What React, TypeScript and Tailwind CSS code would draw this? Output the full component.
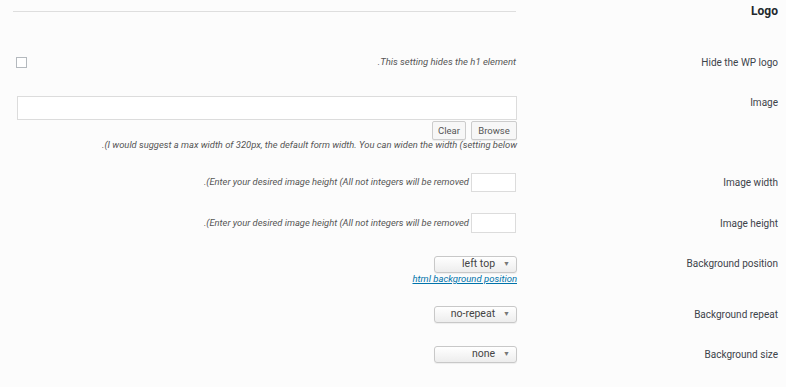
import React from "react";

const font = { fontFamily: "Roboto, 'Noto Sans', sans-serif" };

function Select({ value }: { value: string }) {
  return (
    <div className="w-[83px] h-[17px] flex items-center justify-end pr-[6px] border border-[#c8c8c8] rounded-[3px] bg-gradient-to-b from-[#ffffff] to-[#ededed] shadow-[0_1px_1px_rgba(0,0,0,0.06)]">
      <span className="text-[10.5px] text-[#444] leading-none">{value}</span>
      <span className="text-[7px] text-[#777] ml-[8px] leading-none">▼</span>
    </div>
  );
}

function Label({ children, className = "" }: { children: React.ReactNode; className?: string }) {
  return (
    <div className={"flex-1 text-right pr-[8px] text-[10px] text-[#3c434a] " + className}>{children}</div>
  );
}

export default function App() {
  return (
    <div style={font} className="w-[786px] h-[387px] bg-[#fcfcfc] overflow-hidden">
      {/* Header */}
      <div className="flex h-[22px] items-center">
        <div className="w-[517px] pl-[13px] pr-[1px]">
          <div className="h-px bg-[#dedede]" />
        </div>
        <Label className="font-bold !text-[12px] !text-[#23282d]">Logo</Label>
      </div>

      {/* Hide WP logo */}
      <div className="flex h-[25px] items-center mt-[28px]">
        <div className="w-[517px] flex items-center justify-between pl-[16px] pr-[1px]">
          <div className="w-[11px] h-[11px] border border-[#b4b9be] bg-white" />
          <span className="italic text-[9.5px] text-[#555]">.This setting hides the h1 element</span>
        </div>
        <Label>Hide the WP logo</Label>
      </div>

      {/* Image */}
      <div className="flex items-start mt-[21px]">
        <div className="w-[517px] pl-[17px] flex flex-col items-end">
          <div className="w-full h-[24px] border border-[#dcdcdc] bg-white" />
          <div className="flex gap-[5px] mt-[1px]">
            <button className="w-[34px] h-[19px] border border-[#cccccc] rounded-[2px] bg-[#f7f7f7] text-[9.5px] text-[#555] leading-none shadow-[0_1px_0_rgba(0,0,0,0.06)]">Clear</button>
            <button className="w-[46px] h-[19px] border border-[#cccccc] rounded-[2px] bg-[#f7f7f7] text-[9.5px] text-[#555] leading-none shadow-[0_1px_0_rgba(0,0,0,0.06)]">Browse</button>
          </div>
          <div className="italic text-[9.4px] text-[#555] leading-[11px] -mt-[1px]">.(I would suggest a max width of 320px, the default form width. You can widen the width (setting below</div>
        </div>
        <Label className="leading-[14px]">Image</Label>
      </div>

      {/* Image width */}
      <div className="flex h-[19px] items-center mt-[23px]">
        <div className="w-[517px] flex items-center justify-end gap-[2px] pr-[1px]">
          <span className="italic text-[9.4px] text-[#555]">.(Enter your desired image height (All not integers will be removed</span>
          <div className="w-[45px] h-[19px] border border-[#dcdcdc] bg-white" />
        </div>
        <Label>Image width</Label>
      </div>

      {/* Image height */}
      <div className="flex h-[20px] items-center mt-[21px]">
        <div className="w-[517px] flex items-center justify-end gap-[2px] pr-[1px]">
          <span className="italic text-[9.4px] text-[#555]">.(Enter your desired image height (All not integers will be removed</span>
          <div className="w-[45px] h-[20px] border border-[#dcdcdc] bg-white" />
        </div>
        <Label>Image height</Label>
      </div>

      {/* Background position */}
      <div className="flex items-start mt-[23px]">
        <div className="w-[517px] flex flex-col items-end">
          <Select value="left top" />
          <a className="italic underline text-[9.5px] text-[#0073aa] leading-[11px]">html background position</a>
        </div>
        <Label className="leading-[16px]">Background position</Label>
      </div>

      {/* Background repeat */}
      <div className="flex h-[17px] items-center mt-[22px]">
        <div className="w-[517px] flex justify-end">
          <Select value="no-repeat" />
        </div>
        <Label>Background repeat</Label>
      </div>

      {/* Background size */}
      <div className="flex h-[17px] items-center mt-[23px]">
        <div className="w-[517px] flex justify-end">
          <Select value="none" />
        </div>
        <Label>Background size</Label>
      </div>
    </div>
  );
}
